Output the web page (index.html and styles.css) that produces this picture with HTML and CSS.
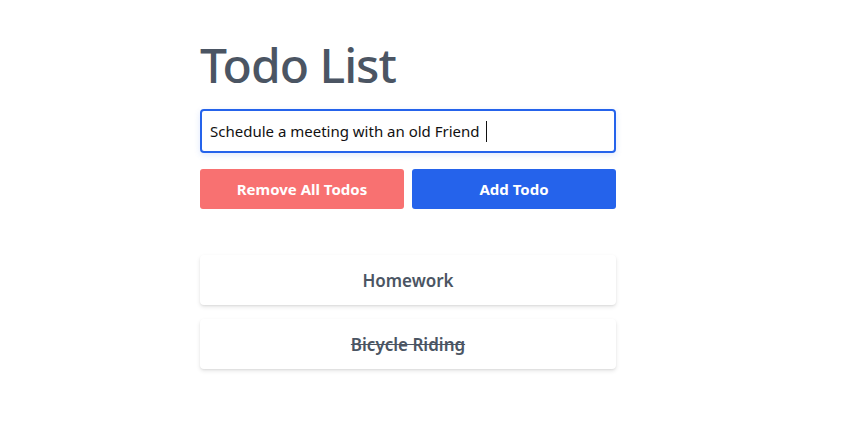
FILE: index.html
```html
<!DOCTYPE html>
<html>
<head>
<meta charset="utf-8">
<link rel="stylesheet" href="styles.css">
</head>
<body>
<main class="wrap">
  <h1 class="title">Todo List</h1>
  <div class="field-box">
    <input class="field" type="text" value="Schedule a meeting with an old Friend ">
    <span class="caret"></span>
  </div>
  <div class="actions">
    <button class="btn btn-red">Remove All Todos</button>
    <button class="btn btn-blue">Add Todo</button>
  </div>
  <ul class="list">
    <li class="item">Homework</li>
    <li class="item done">Bicycle Riding</li>
  </ul>
</main>
</body>
</html>
```
FILE: styles.css
```css
* { box-sizing: border-box; }
html, body { margin: 0; padding: 0; background: #fff; }
body { font-family: "Noto Sans", "Open Sans", sans-serif; }
.wrap {
  width: 416px;
  margin-left: 200px;
  padding-top: 30px;
  padding-bottom: 30px;
  display: flex;
  flex-direction: column;
}
.title {
  margin: 0;
  font-size: 48px;
  font-weight: 500;
  line-height: 70px;
  color: #4b5563;
  letter-spacing: -1px;
}
.field-box {
  position: relative;
  margin-top: 9px;
}
.field {
  display: block;
  height: 44px;
  width: 100%;
  border: 2px solid #2563eb;
  border-radius: 4px;
  padding: 0 8px;
  font-family: inherit;
  font-size: 15px;
  color: #111;
  outline: none;
  box-shadow: 0 2px 6px rgba(37, 99, 235, 0.15);
}
.caret {
  position: absolute;
  left: 286px;
  top: 12px;
  width: 1px;
  height: 21px;
  background: #111;
}
.actions {
  margin-top: 16px;
  display: flex;
  gap: 8px;
}
.btn {
  flex: 1;
  height: 40px;
  border: none;
  border-radius: 3px;
  color: #fff;
  font-family: inherit;
  font-size: 15px;
  font-weight: 700;
}
.btn-red { background: #f87171; }
.btn-blue { background: #2563eb; }
.list {
  list-style: none;
  margin: 46px 0 0;
  padding: 0;
  display: flex;
  flex-direction: column;
  gap: 14px;
}
.item {
  height: 50px;
  display: flex;
  align-items: center;
  justify-content: center;
  border-radius: 4px;
  background: #fff;
  box-shadow: 0 2px 4px rgba(0, 0, 0, 0.1), 0 1px 2px rgba(0, 0, 0, 0.06);
  color: #4b5563;
  font-size: 17px;
  font-weight: 600;
}
.done { text-decoration: line-through; }
```
